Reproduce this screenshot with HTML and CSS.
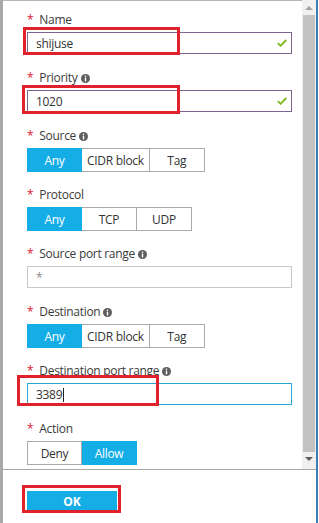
FILE: index.html
```html
<!DOCTYPE html>
<html lang="en">
<head>
    <meta charset="UTF-8">
    <meta name="viewport" content="width=device-width, initial-scale=1.0">
    <title>Add inbound security rule</title>
    <link rel="stylesheet" href="styles.css">
</head>
<body>
    <div class="frame">
        <div class="blade">
            <div class="main">
                <div class="content">
                    <div class="field">
                        <div class="label"><span class="req">*</span>Name</div>
                        <div class="input-wrap">
                            <div class="input valid">
                                <span>shijuse</span>
                                <svg class="check" width="10" height="8" viewBox="0 0 10 8"><polyline points="0.8,4.2 3.6,6.8 9.2,1" fill="none" stroke="#7cb518" stroke-width="1.8"/></svg>
                            </div>
                            <span class="mark mark-name"></span>
                        </div>
                    </div>

                    <div class="field">
                        <div class="label"><span class="req">*</span>Priority<svg class="info" width="9" height="9" viewBox="0 0 9 9"><circle cx="4.5" cy="4.5" r="4.5" fill="#5e5e5e"/><rect x="3.8" y="1.6" width="1.4" height="1.3" fill="#fff"/><rect x="3.8" y="3.6" width="1.4" height="3.8" fill="#fff"/></svg></div>
                        <div class="input-wrap">
                            <div class="input valid">
                                <span>1020</span>
                                <svg class="check" width="10" height="8" viewBox="0 0 10 8"><polyline points="0.8,4.2 3.6,6.8 9.2,1" fill="none" stroke="#7cb518" stroke-width="1.8"/></svg>
                            </div>
                            <span class="mark mark-priority"></span>
                        </div>
                    </div>

                    <div class="field seg-field">
                        <div class="label"><span class="req">*</span>Source<svg class="info" width="9" height="9" viewBox="0 0 9 9"><circle cx="4.5" cy="4.5" r="4.5" fill="#5e5e5e"/><rect x="3.8" y="1.6" width="1.4" height="1.3" fill="#fff"/><rect x="3.8" y="3.6" width="1.4" height="3.8" fill="#fff"/></svg></div>
                        <div class="seg">
                            <span class="active">Any</span>
                            <span>CIDR block</span>
                            <span>Tag</span>
                        </div>
                    </div>

                    <div class="field seg-field">
                        <div class="label"><span class="req">*</span>Protocol</div>
                        <div class="seg">
                            <span class="active">Any</span>
                            <span>TCP</span>
                            <span>UDP</span>
                        </div>
                    </div>

                    <div class="field">
                        <div class="label"><span class="req">*</span>Source port range<svg class="info" width="9" height="9" viewBox="0 0 9 9"><circle cx="4.5" cy="4.5" r="4.5" fill="#5e5e5e"/><rect x="3.8" y="1.6" width="1.4" height="1.3" fill="#fff"/><rect x="3.8" y="3.6" width="1.4" height="3.8" fill="#fff"/></svg></div>
                        <div class="input-wrap">
                            <div class="input">
                                <span class="placeholder">*</span>
                            </div>
                        </div>
                    </div>

                    <div class="field seg-field">
                        <div class="label"><span class="req">*</span>Destination<svg class="info" width="9" height="9" viewBox="0 0 9 9"><circle cx="4.5" cy="4.5" r="4.5" fill="#5e5e5e"/><rect x="3.8" y="1.6" width="1.4" height="1.3" fill="#fff"/><rect x="3.8" y="3.6" width="1.4" height="3.8" fill="#fff"/></svg></div>
                        <div class="seg">
                            <span class="active">Any</span>
                            <span>CIDR block</span>
                            <span>Tag</span>
                        </div>
                    </div>

                    <div class="field">
                        <div class="label"><span class="req">*</span>Destination port range<svg class="info" width="9" height="9" viewBox="0 0 9 9"><circle cx="4.5" cy="4.5" r="4.5" fill="#5e5e5e"/><rect x="3.8" y="1.6" width="1.4" height="1.3" fill="#fff"/><rect x="3.8" y="3.6" width="1.4" height="3.8" fill="#fff"/></svg></div>
                        <div class="input-wrap">
                            <div class="input focus">
                                <span>3389<span class="caret"></span></span>
                            </div>
                            <span class="mark mark-port"></span>
                        </div>
                    </div>

                    <div class="field seg-field">
                        <div class="label"><span class="req">*</span>Action</div>
                        <div class="seg">
                            <span>Deny</span>
                            <span class="active">Allow</span>
                        </div>
                    </div>
                </div>

                <div class="scrollbar">
                    <span class="arrow up"></span>
                    <div class="thumb"></div>
                    <span class="arrow down"></span>
                </div>
            </div>

            <div class="footer">
                <div class="btn-wrap">
                    <button class="ok-button">OK</button>
                    <span class="mark mark-ok"></span>
                </div>
            </div>
        </div>
        <div class="edge"></div>
    </div>
</body>
</html>
```

FILE: styles.css
```css
* {
    margin: 0;
    padding: 0;
    box-sizing: border-box;
}

body {
    font-family: 'Open Sans', 'Noto Sans', sans-serif;
    font-size: 12px;
    letter-spacing: -0.3px;
    color: #3b3b3b;
    background: white;
    width: 319px;
    height: 523px;
    overflow: hidden;
}

.frame {
    display: flex;
    height: 523px;
}

.blade {
    flex: 1;
    display: flex;
    flex-direction: column;
    border-left: 3px solid #a9a9a9;
}

.edge {
    width: 2px;
    background: #3d7db0;
    margin-right: 1px;
}

.main {
    height: 469px;
    display: flex;
}

.content {
    flex: 1;
    border-top: 1px solid #b5b5b5;
    padding: 10px 10px 0 24px;
}

/* Campos */
.field {
    margin-bottom: 15px;
}

.seg-field {
    margin-bottom: 14px;
}

.label {
    height: 18px;
    line-height: 18px;
    margin-bottom: 3px;
    display: flex;
    align-items: center;
}

.req {
    color: #e0182e;
    margin-right: 6px;
}

.info {
    margin-left: 3px;
    margin-top: 1px;
}

.input-wrap {
    position: relative;
}

.input {
    height: 22px;
    border: 1px solid #c8c8c8;
    padding: 0 4px 0 8px;
    display: flex;
    align-items: center;
    justify-content: space-between;
    color: #333;
}

.input.valid {
    border-color: #7f6591;
}

.input.focus {
    border-color: #2aa6d6;
}

.placeholder {
    color: #8a8a8a;
}

.caret {
    display: inline-block;
    width: 1px;
    height: 14px;
    background: #222;
    vertical-align: -3px;
    margin-left: 1px;
}

/* Botões segmentados */
.seg {
    display: flex;
}

.seg span {
    height: 24px;
    min-width: 55px;
    padding: 0 5px;
    border: 1px solid #a9a9a9;
    border-left: none;
    display: flex;
    align-items: center;
    justify-content: center;
    color: #333;
}

.seg span:first-child {
    border-left: 1px solid #a9a9a9;
}

.seg span.active {
    background: #15ade6;
    border-color: #15ade6;
    color: white;
}

/* Barra de rolagem */
.scrollbar {
    width: 14px;
    background: #f0f0f0;
    display: flex;
    flex-direction: column;
    align-items: center;
}

.arrow {
    width: 0;
    height: 0;
    border-left: 4px solid transparent;
    border-right: 4px solid transparent;
}

.arrow.up {
    border-bottom: 4px solid #a3a3a3;
    margin: 6px 0 5px;
}

.arrow.down {
    border-top: 4px solid #606060;
    margin-top: 5px;
}

.thumb {
    width: 12px;
    height: 437px;
    background: #c2c2c2;
}

/* Rodapé */
.footer {
    flex: 1;
    border-top: 1px solid #a8a8a8;
    padding: 21px 0 0 24px;
}

.btn-wrap {
    position: relative;
    display: inline-block;
}

.ok-button {
    display: block;
    width: 90px;
    height: 20px;
    background: #15ade6;
    color: white;
    border: none;
    font-family: 'Open Sans', 'Noto Sans', sans-serif;
    font-size: 12px;
    font-weight: 700;
}

/* Marcações vermelhas */
.mark {
    position: absolute;
    border: 3px solid #e1222c;
}

.mark-name {
    left: -4px;
    top: -5px;
    width: 157px;
    height: 28px;
}

.mark-priority {
    left: -5px;
    top: -5px;
    width: 158px;
    height: 29px;
}

.mark-port {
    left: -10px;
    top: -8px;
    width: 142px;
    height: 31px;
}

.mark-ok {
    left: -5px;
    top: -6px;
    width: 99px;
    height: 28px;
}
```
